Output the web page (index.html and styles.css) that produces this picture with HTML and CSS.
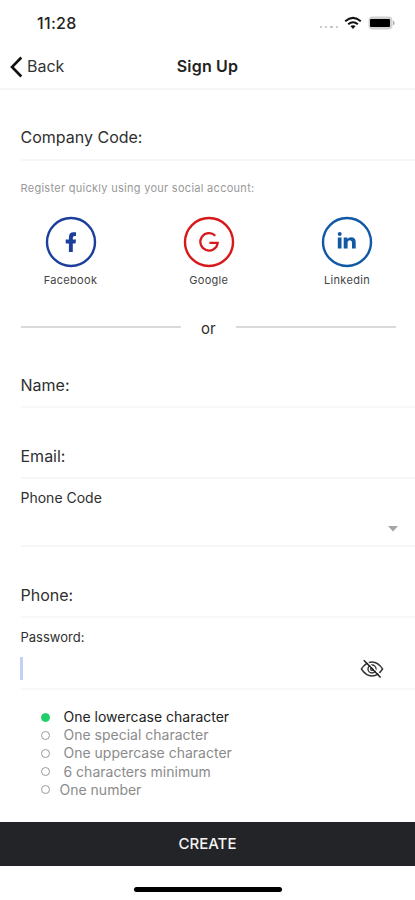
FILE: index.html
```html
<!DOCTYPE html>
<html lang="en">
<head>
<meta charset="utf-8">
<title>Sign Up</title>
<link rel="stylesheet" href="styles.css">
</head>
<body>
<div class="status">
  <span class="time">11:28</span>
  <span class="dots"><i></i><i></i><i></i><i></i></span>
  <svg class="wifi" width="18" height="14" viewBox="0 0 18 14"><g fill="none" stroke="#111" stroke-width="2"><path d="M1.2 5.2Q9-1.4 16.8 5.2"/><path d="M4.2 8.2Q9 4.2 13.8 8.2"/></g><path d="M6.4 10.1Q9 8.2 11.6 10.1L9 13z" fill="#111"/></svg>
  <svg class="battery" width="28" height="14" viewBox="0 0 28 14"><rect x=".5" y=".5" width="24" height="13" rx="4" fill="#d2d2d2"/><rect x="2" y="3" width="20" height="8" rx="1" fill="#000"/><path d="M25.2 4.5Q28 7 25.2 9.5z" fill="#999"/></svg>
</div>
<header class="nav">
  <svg class="chevron" width="13" height="22" viewBox="0 0 13 22"><path d="M11.3 1.5L2 11l9.3 9.5" fill="none" stroke="#111" stroke-width="2.6"/></svg>
  <span class="back">Back</span>
  <h1>Sign Up</h1>
</header>
<main>
  <div class="field company"><label class="big">Company Code:</label></div>
  <p class="hint">Register quickly using your social account:</p>
  <div class="social">
    <div class="account">
      <svg width="52" height="52" viewBox="0 0 52 52"><circle cx="26" cy="26" r="24" fill="none" stroke="#1d3f9c" stroke-width="2.4"/><path d="M23.9 36V27.4H20.7V23.6h3.2V21.4Q23.9 16.3 28.4 16.3H31v3.6h-1.4q-1.8 0-1.8 1.8v1.9H31l-.5 3.8h-2.7V36z" fill="#1d3f9c"/></svg>
      <span>Facebook</span>
    </div>
    <div class="account">
      <svg width="52" height="52" viewBox="0 0 52 52"><circle cx="26" cy="26" r="24" fill="none" stroke="#d7191c" stroke-width="2.4"/><path d="M32.3 19.8A8.7 8.7 0 1 0 34.7 26.8H26.5" fill="none" stroke="#d7191c" stroke-width="2.2"/></svg>
      <span>Google</span>
    </div>
    <div class="account">
      <svg width="52" height="52" viewBox="0 0 52 52"><circle cx="26" cy="26" r="24" fill="none" stroke="#1259a5" stroke-width="2.4"/><path d="M16.8 21.5h3.7v11h-3.7zM22.7 21.5h3.6v1.6q1.2-1.9 3.7-1.9 4.7 0 4.7 5v6.3H31v-5.7q0-2.5-2-2.5-2.4 0-2.4 2.8v5.4h-3.9z" fill="#1259a5"/><circle cx="18.7" cy="18" r="2" fill="#1259a5"/></svg>
      <span>Linkedin</span>
    </div>
  </div>
  <div class="divider"><hr><span>or</span><hr></div>
  <div class="field name"><label class="big">Name:</label></div>
  <div class="field email"><label class="big">Email:</label></div>
  <div class="field code"><label class="small pc">Phone Code</label><svg class="caret" width="10" height="6" viewBox="0 0 10 6"><path d="M0 0h10L5 5.6z" fill="#a5a5a5"/></svg></div>
  <div class="field phone"><label class="big">Phone:</label></div>
  <div class="field password">
    <label class="small pw">Password:</label>
    <div class="entry"><span class="cursor"></span>
      <svg width="24" height="20" viewBox="0 0 24 20" fill="none" stroke="#333" stroke-width="1.4"><path d="M1.4 10Q6 3 12 3t10.6 7Q18 17 12 17T1.4 10z"/><circle cx="12" cy="10" r="4"/><circle cx="12" cy="10" r="1.3"/><path d="M5.1 .6L22 17.2" stroke="#fff" stroke-width="1.3"/><path d="M3.8 1.2L20.6 18.4" stroke="#222" stroke-width="1.5"/></svg>
    </div>
  </div>
  <ul class="rules">
    <li class="ok"><i></i><span>One lowercase character</span></li>
    <li><i></i><span>One special character</span></li>
    <li><i></i><span>One uppercase character</span></li>
    <li><i></i><span>6 characters minimum</span></li>
    <li class="near"><i></i><span>One number</span></li>
  </ul>
</main>
<button class="create">CREATE</button>
<div class="home"></div>
</body>
</html>
```
FILE: styles.css
```css
* { box-sizing: border-box; }
body { margin: 0; width: 415px; height: 900px; overflow: hidden; background: #fff; color: #2f2f2f; font-family: Inter, "Liberation Sans", sans-serif; display: flex; flex-direction: column; }
svg { display: block; flex: none; }
.status { height: 46px; padding: 0 19px 0 37px; display: flex; align-items: center; }
.time { font-size: 16px; font-weight: 500; line-height: 20px; letter-spacing: .3px; color: #222; }
.dots { margin: 8px 6px 0 auto; display: flex; gap: 2.8px; }
.dots i { width: 2.5px; height: 2.5px; border-radius: 50%; background: #bbb; }
.wifi { margin-right: 6px; }
.nav { height: 44px; padding: 0 10px; border-bottom: 2px solid #f5f5f5; display: grid; grid-template-columns: 17px 1fr auto 1fr 17px; align-items: center; }
.chevron { margin-top: -1px; }
.back { font-size: 16px; line-height: 20px; margin-top: -2px; color: #333; }
h1 { margin: 0; font-size: 16px; line-height: 20px; margin-top: -2px; font-weight: 600; color: #222; letter-spacing: .2px; }
main { height: 731.5px; padding-left: 20.5px; display: flex; flex-direction: column; }
.field { border-bottom: 2px solid #f7f7f7; display: flex; }
.big { font-size: 16px; line-height: 20px; }
.small { line-height: 18px; }
.company { height: 70.5px; padding-top: 37px; }
.hint { margin: 19px 0 0; height: 18px; font-size: 11px; line-height: 16px; letter-spacing: .28px; color: #999; }
.social { margin-top: 18px; display: flex; justify-content: space-between; height: 76px; padding: 0 18px 0 0; }
.account { width: 100px; display: flex; flex-direction: column; align-items: center; }
.account span { margin-top: 4px; font-size: 11px; line-height: 16px; letter-spacing: .3px; color: #444; }
.divider { height: 20px; margin-top: 26px; padding-right: 19px; display: grid; grid-template-columns: 160px 1fr 160px; text-align: center; font-size: 15px; line-height: 21px; }
.divider hr { width: 160px; height: 2px; margin: 8px 0 0; border: 0; background: #d8dadb; }
.name { height: 70.5px; padding-top: 37px; }
.email { height: 70.5px; padding-top: 37.5px; }
.code { height: 68.5px; padding-top: 10.5px; justify-content: space-between; }
.caret { margin: 37px 17px 0 0; }
.phone { height: 70.5px; padding-top: 38px; }
.password { height: 72px; padding-top: 10.5px; flex-direction: column; }
.pc { font-size: 14px; }
.pw { font-size: 13px; }
.entry { display: flex; align-items: center; justify-content: space-between; margin-top: 11px; height: 23px; padding-right: 31px; }
.cursor { width: 3px; height: 23px; margin-left: -.5px; background: #c3cff5; }
.rules { list-style: none; margin: 18.5px 0 0; padding: 0 0 0 20px; font-size: 14px; color: #8b8b8b; }
.rules li { height: 18.2px; line-height: 18px; display: flex; align-items: center; }
.rules i { width: 9px; height: 9px; margin-right: 14px; border: 1px solid #999; border-radius: 50%; }
.rules .ok { color: #222; }
.rules .ok i { background: #20cf69; border-color: #20cf69; }
.rules .near i { margin-right: 10px; }
.create { height: 44.5px; border: 0; background: #222428; color: #f5f5f5; font: 500 15px/20px Inter, sans-serif; padding: 0; }
.home { width: 148px; height: 4.5px; margin: 21px auto 0 134px; border-radius: 3px; background: #000; }
```
